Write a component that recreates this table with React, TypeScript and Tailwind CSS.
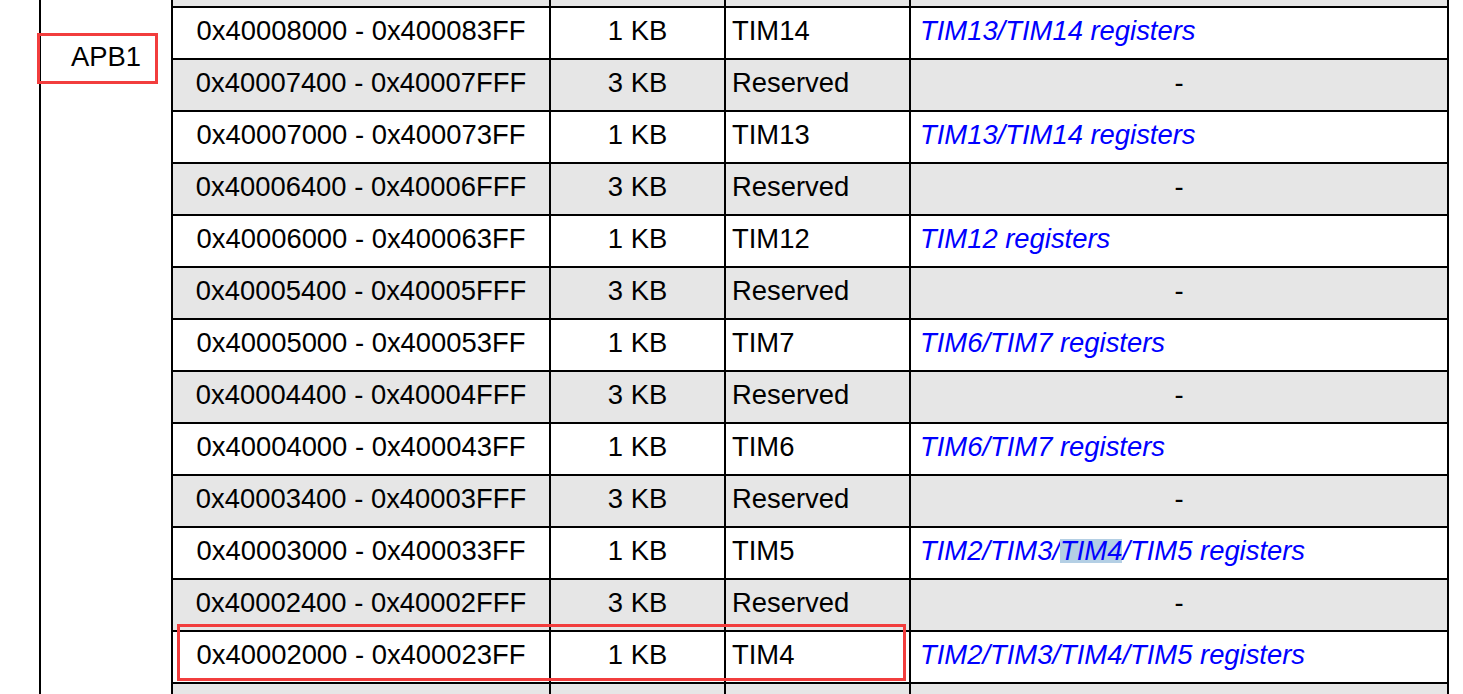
import React from 'react';

interface Row {
  range: string;
  size: string;
  name: string;
  regs?: string;
  mark?: boolean;
  blank?: boolean;
}

const rows: Row[] = [
  // only the bottom edge of this row is in view
  { range: '', size: '', name: '', blank: true },
  { range: '0x40008000 - 0x400083FF', size: '1 KB', name: 'TIM14', regs: 'TIM13/TIM14 registers' },
  { range: '0x40007400 - 0x40007FFF', size: '3 KB', name: 'Reserved' },
  { range: '0x40007000 - 0x400073FF', size: '1 KB', name: 'TIM13', regs: 'TIM13/TIM14 registers' },
  { range: '0x40006400 - 0x40006FFF', size: '3 KB', name: 'Reserved' },
  { range: '0x40006000 - 0x400063FF', size: '1 KB', name: 'TIM12', regs: 'TIM12 registers' },
  { range: '0x40005400 - 0x40005FFF', size: '3 KB', name: 'Reserved' },
  { range: '0x40005000 - 0x400053FF', size: '1 KB', name: 'TIM7', regs: 'TIM6/TIM7 registers' },
  { range: '0x40004400 - 0x40004FFF', size: '3 KB', name: 'Reserved' },
  { range: '0x40004000 - 0x400043FF', size: '1 KB', name: 'TIM6', regs: 'TIM6/TIM7 registers' },
  { range: '0x40003400 - 0x40003FFF', size: '3 KB', name: 'Reserved' },
  { range: '0x40003000 - 0x400033FF', size: '1 KB', name: 'TIM5', regs: 'TIM2/TIM3/TIM4/TIM5 registers', mark: true },
  { range: '0x40002400 - 0x40002FFF', size: '3 KB', name: 'Reserved' },
  { range: '0x40002000 - 0x400023FF', size: '1 KB', name: 'TIM4', regs: 'TIM2/TIM3/TIM4/TIM5 registers' },
  // top edge of the next row
  { range: '', size: '', name: '', blank: true },
];

const cell = 'h-[50px] flex items-center pb-[4px] whitespace-nowrap';

export default function App() {
  return (
    <div className="relative w-[1463px] h-[694px] overflow-hidden bg-white text-black font-['Liberation_Sans',Arial,sans-serif] text-[27.4px]">
      <div className="flex h-full">
        <div className="w-[39px] shrink-0" />
        {/* bus column, merged cell */}
        <div className="w-[132px] shrink-0 border-l-2 border-black flex justify-center pt-[43px]">
          <span className="leading-none h-fit">APB1</span>
        </div>

        {/* address table */}
        <div className="shrink-0 self-start -mt-[44px] grid grid-cols-[376px_173px_183px_536px] gap-[2px] bg-black px-[2px]">
          {rows.map((r, i) => {
            const bg = r.regs ? 'bg-white' : 'bg-[#e6e6e6]';
            return (
              <React.Fragment key={i}>
                <div className={`${cell} ${bg} justify-center`}>{r.range}</div>
                <div className={`${cell} ${bg} justify-center`}>{r.size}</div>
                <div className={`${cell} ${bg} pl-[6px]`}>{r.name}</div>
                {r.regs ? (
                  <div className={`${cell} ${bg} pl-[9px] italic text-[#0000ff]`}>
                    {r.mark ? (
                      <span>
                        TIM2/TIM3/
                        <span className="inline-block h-[24px] leading-[24px] bg-[#b4cfe4]">TIM4</span>
                        /TIM5 registers
                      </span>
                    ) : (
                      r.regs
                    )}
                  </div>
                ) : (
                  <div className={`${cell} ${bg} justify-center`}>{r.blank ? '' : '-'}</div>
                )}
              </React.Fragment>
            );
          })}
        </div>
      </div>

      {/* annotation boxes */}
      <div className="absolute left-[37px] top-[33px] w-[121px] h-[51px] border-[3px] border-[#f23d3d]" />
      <div className="absolute left-[177px] top-[624px] w-[729px] h-[57px] border-[3px] border-[#f23d3d]" />
    </div>
  );
}
